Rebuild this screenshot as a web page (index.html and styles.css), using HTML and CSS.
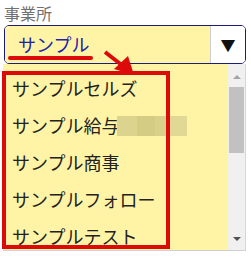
FILE: index.html
```html
<!DOCTYPE html>
<html lang="ja">
<head>
<meta charset="utf-8">
<link rel="stylesheet" href="styles.css">
</head>
<body>
<div class="page">
  <div class="label">事業所</div>
  <div class="select">
    <div class="select-value"><span class="value-text">サンプル</span></div>
    <div class="select-btn">▼</div>
  </div>
  <div class="list">
    <ul class="items">
      <li class="item">サンプルセルズ</li>
      <li class="item">サンプル給与<span class="mosaic"><i class="m1"></i><i class="m2"></i><i class="m3"></i><i class="m4"></i></span></li>
      <li class="item">サンプル商事</li>
      <li class="item">サンプルフォロー</li>
      <li class="item">サンプルテスト</li>
    </ul>
    <div class="scrollbar">
      <div class="sb-up"></div>
      <div class="sb-thumb"></div>
      <div class="sb-track"></div>
      <div class="sb-down"></div>
    </div>
  </div>
  <svg class="annot" width="251" height="257" viewBox="0 0 251 257">
    <line x1="10" y1="58" x2="91" y2="58" stroke="#dc0a0a" stroke-width="4" stroke-linecap="round"/>
    <line x1="105" y1="52" x2="123" y2="66" stroke="#dc0a0a" stroke-width="4"/>
    <polygon points="114,69 128,56 134,75" fill="#dc0a0a"/>
    <rect x="4" y="73" width="164" height="174" fill="none" stroke="#dc0a0a" stroke-width="4"/>
  </svg>
</div>
</body>
</html>
```

FILE: styles.css
```css
html, body {
  margin: 0;
  padding: 0;
  background: #ffffff;
}
.page {
  position: relative;
  width: 251px;
  height: 257px;
  overflow: hidden;
  font-family: "Noto Sans CJK JP", "Noto Sans", sans-serif;
}
.label {
  height: 25px;
  padding-left: 4px;
  font-size: 16px;
  line-height: 27px;
  color: #707070;
}
.select {
  display: flex;
  margin-left: 4px;
  width: 242px;
  height: 39px;
  box-sizing: border-box;
  border: 1px solid #1c1c7a;
  border-radius: 5px;
  overflow: hidden;
}
.select-value {
  flex: 1;
  background: #fff4a6;
  padding-left: 13px;
  font-size: 18px;
  line-height: 36px;
  color: #2222a8;
}
.value-text {
  border-bottom: 1px dotted #5050c0;
}
.select-btn {
  width: 34px;
  background: #ffffff;
  border-left: 1px solid #cfcfcf;
  text-align: center;
  font-size: 15px;
  line-height: 37px;
  color: #111111;
}
.list {
  display: flex;
  margin-left: 3px;
  width: 243px;
  height: 187px;
  box-sizing: border-box;
  background: #fff4a6;
  border-right: 1px solid #d6d6d6;
  border-bottom: 1px solid #d0d0d0;
}
.items {
  flex: 1;
  list-style: none;
  margin: 0;
  padding: 6px 0 0 9px;
}
.item {
  height: 37px;
  font-size: 18px;
  line-height: 37px;
  color: #222222;
  white-space: nowrap;
  display: flex;
  align-items: center;
}
.mosaic {
  display: inline-flex;
  height: 20px;
  margin-left: -2px;
}
.mosaic i {
  display: block;
  height: 20px;
}
.m1 { width: 20px; background: #dcd38e; }
.m2 { width: 18px; background: #d5cc84; }
.m3 { width: 14px; background: #d9d08a; }
.m4 { width: 18px; background: #e0d894; }
.scrollbar {
  width: 17px;
  background: #f0f0f0;
  display: flex;
  flex-direction: column;
  align-items: center;
}
.sb-up {
  margin-top: 11px;
  width: 0;
  height: 0;
  border-left: 4px solid transparent;
  border-right: 4px solid transparent;
  border-bottom: 4px solid #a3a3a3;
}
.sb-thumb {
  margin-top: 8px;
  width: 15px;
  height: 66px;
  background: #c1c1c1;
}
.sb-track {
  flex: 1;
}
.sb-down {
  margin-bottom: 9px;
  width: 0;
  height: 0;
  border-left: 4px solid transparent;
  border-right: 4px solid transparent;
  border-top: 4px solid #505050;
}
.annot {
  position: absolute;
  left: 0;
  top: 0;
  pointer-events: none;
}
```
